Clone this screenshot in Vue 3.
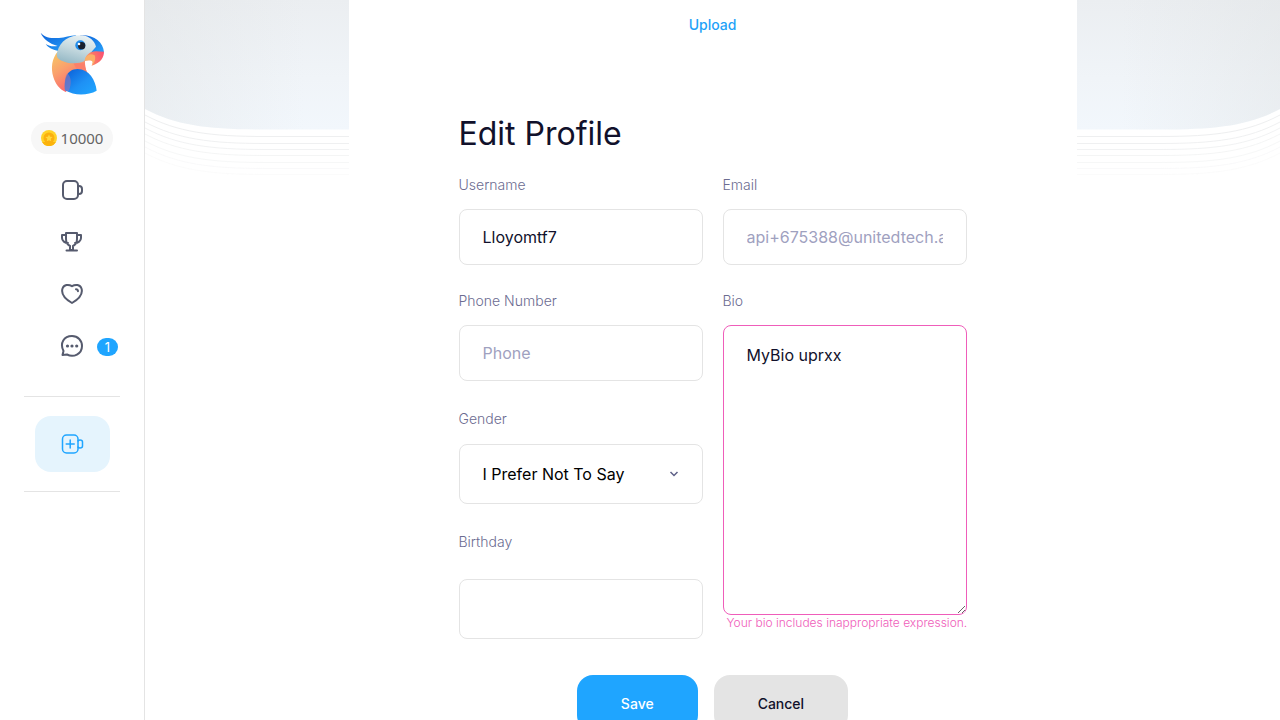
<script setup>
import { ref } from 'vue'

const username = ref('Lloyomtf7')
const email = ref('')
const phone = ref('')
const bio = ref('MyBio uprxx')
const gender = ref('none')
const birthday = ref('')

const rings = [
  { y: 6, o: 1 },
  { y: 13, o: 0.95 },
  { y: 19, o: 0.8 },
  { y: 25, o: 0.65 },
  { y: 32, o: 0.5 },
  { y: 38, o: 0.35 },
  { y: 44, o: 0.25 },
]
</script>

<template>
  <div class="shell">
    <aside class="sidebar">
      <a class="logo" href="#" aria-label="Home">
        <svg viewBox="-9 0 270 270" width="90" height="90" aria-hidden="true">
          <defs>
            <linearGradient id="crest" x1="0" y1="0" x2="1" y2="1">
              <stop offset="0" stop-color="#0b5fd8" /><stop offset="1" stop-color="#2aa5fb" />
            </linearGradient>
            <linearGradient id="body" x1="0" y1="0" x2="0.6" y2="1">
              <stop offset="0" stop-color="#f6cb64" /><stop offset="0.45" stop-color="#faa06c" /><stop offset="1" stop-color="#fb5c6e" />
            </linearGradient>
            <linearGradient id="face" x1="0.7" y1="0" x2="0.3" y2="1">
              <stop offset="0" stop-color="#eaf2f4" /><stop offset="0.5" stop-color="#c5d9df" /><stop offset="1" stop-color="#96b9c6" />
            </linearGradient>
            <linearGradient id="wing" x1="0" y1="0" x2="1" y2="1">
              <stop offset="0" stop-color="#0a5cd6" /><stop offset="0.55" stop-color="#1e91f5" /><stop offset="1" stop-color="#20a7ff" />
            </linearGradient>
            <linearGradient id="beak" x1="0" y1="0.6" x2="1" y2="0.3">
              <stop offset="0" stop-color="#fca567" /><stop offset="0.5" stop-color="#fb7568" /><stop offset="1" stop-color="#fa5271" />
            </linearGradient>
          </defs>
          <path d="M84 94C65 116 62 145 70 171C76 191 88 208 107 216L172 160C166 148 164 136 165 120Z" fill="url(#body)" />
          <path d="M32 38C45 54 67 55 87 54C105 53 119 47 139 46L86 93C69 90 54 83 47 72C58 80 72 80 83 78C59 71 40 58 32 38Z" fill="url(#crest)" />
          <path d="M150 46C190 43 220 65 222 97L181 102L164 65Z" fill="url(#crest)" />
          <path d="M130 130H165C165 142 168 152 175 164L147 160Z" fill="#fb806b" />
          <path d="M82 95C91 60 123 44 157 46C178 48 194 63 198 80C184 97 169 111 164 123C145 132 115 132 95 122C82 116 78 108 82 95Z" fill="url(#face)" />
          <path d="M164 123C166 105 180 95 198 94L222 95C222 111 213 128 185 137C191 128 190 122 181 121C175 120 169 121 164 123Z" fill="url(#beak)" />
          <path d="M164 123C166 108 178 97 194 106C198 115 194 130 185 137C190 126 188 122 181 121C175 120 169 121 164 123Z" fill="#fbb068" />
          <path d="M105 211C102 181 108 147 143 147C177 148 196 179 200 212C173 227 134 228 105 211Z" fill="url(#wing)" />
          <path d="M105 211C103 190 104 172 112 160C124 171 126 190 116 214Z" fill="#9274b5" opacity="0.6" />
          <circle cx="151" cy="76" r="15" fill="#218ceb" />
          <circle cx="155" cy="77" r="11" fill="#17202e" />
          <circle cx="147" cy="72" r="4" fill="#fff" />
        </svg>
      </a>

      <a class="coins" href="#">
        <svg viewBox="0 0 16 16" width="16" height="16" aria-hidden="true">
          <circle cx="8" cy="8" r="8" fill="#ffd329" />
          <path d="M1 12A8 8 0 0 0 15 12Z" fill="#fbb40b" />
          <circle cx="8" cy="8" r="5.500" fill="#fbb00f" />
          <path d="M8 4.500l1.100 2.300 2.500.3-1.900 1.700.5 2.500L8 10.200l-2.200 1.100.5-2.500-1.900-1.700 2.500-.3Z" fill="#ffd83e" />
        </svg>
        <span>10000</span>
      </a>

      <nav class="nav">
        <a href="#" aria-label="Live">
          <svg viewBox="0 0 24 24" width="24" height="24" class="icon">
            <rect x="3" y="3" width="15" height="18" rx="4" />
            <path d="M18 8h1a3 3 0 0 1 3 3v2a3 3 0 0 1-3 3h-1" />
          </svg>
        </a>
        <a href="#" aria-label="Leaderboard">
          <svg viewBox="0 0 24 24" width="24" height="24" class="icon">
            <path d="M6 3h11v6c0 4-2 6-4 7v4h-3v-4c-2-1-4-3-4-7ZM6 5H2v3c0 3 3 5 6 5M17 5h4v3c0 3-3 5-6 5M6.500 20.500h10.500" />
          </svg>
        </a>
        <a href="#" aria-label="Favourites">
          <svg viewBox="0 0 24 24" width="24" height="24" class="icon">
            <path d="M12 4.200C8.500 2 4 2.500 2.500 6.500C0.500 13 7 18 12 21C17 18 23.500 13 21.500 6.500C20 2.500 15.500 2 12 4.200Z" />
            <path d="M16 7.200c1.300 0 1.900.7 2 2" />
          </svg>
        </a>
        <a href="#" aria-label="Messages, 1 unread">
          <svg viewBox="0 0 24 24" width="24" height="24" class="icon">
            <path d="M2.500 21L3.500 17C-0.500 9 4 2 12 2C18 2 22 6.500 22 12C22 20 13.500 24 7 20.500Z" />
            <g class="dots"><circle cx="7.500" cy="12" r="1.600" /><circle cx="12" cy="12" r="1.600" /><circle cx="16.700" cy="12" r="1.600" /></g>
          </svg>
          <span class="badge">1</span>
        </a>
      </nav>

      <div class="create">
        <a href="#" aria-label="Start a stream">
          <svg viewBox="0 0 24 24" width="24" height="24" class="icon">
            <rect x="2.500" y="3" width="15.500" height="18" rx="4" />
            <path d="M18 9c.7-1 1.300-1 2-1 1.500 0 2.500 1 2.500 2v4c0 1-1 2-2.500 2-.7 0-1.300 0-2-1M10.200 8v8M6.200 12h8" />
          </svg>
        </a>
      </div>
    </aside>

    <main class="main">
      <svg class="banner" viewBox="0 0 1135 180" preserveAspectRatio="none" aria-hidden="true">
        <defs>
          <linearGradient id="sky" x1="0" y1="0" x2="0" y2="1">
            <stop offset="0" stop-color="#ebeef1" /><stop offset="0.6" stop-color="#f0f4f8" /><stop offset="1" stop-color="#f2f7fc" />
          </linearGradient>
          <linearGradient id="shade" x1="0" y1="0" x2="1" y2="0">
            <stop offset="0" stop-color="#dfe2e3" stop-opacity="0.4" /><stop offset="0.14" stop-color="#dfe2e3" stop-opacity="0" />
            <stop offset="0.86" stop-color="#dfe2e3" stop-opacity="0" /><stop offset="1" stop-color="#dfe2e3" stop-opacity="0.4" />
          </linearGradient>
        </defs>
        <path d="M0 0H1135V109C1103 126 1070 129.500 1015 129.500H120C65 129.500 32 126 0 109Z" fill="url(#sky)" />
        <path d="M0 0H1135V109C1103 126 1070 129.500 1015 129.500H120C65 129.500 32 126 0 109Z" fill="url(#shade)" />
        <path
          v-for="r in rings"
          :key="r.y"
          :transform="`translate(0 ${r.y})`"
          d="M0 109C32 126 65 130.500 120 130.500H1015C1070 130.500 1103 126 1135 109"
          fill="none"
          stroke="#eeeff0"
          :stroke-opacity="r.o"
        />
      </svg>

      <section class="card">
        <button type="button" class="upload">Upload</button>
        <form class="form" @submit.prevent>
          <h1>Edit Profile</h1>
          <div class="columns">
            <div class="column">
              <div class="field">
                <label for="username">Username</label>
                <input id="username" v-model="username" type="text" />
              </div>
              <div class="field">
                <label for="phone">Phone Number</label>
                <input id="phone" v-model="phone" type="tel" placeholder="Phone" />
              </div>
              <div class="field gender">
                <label for="gender">Gender</label>
                <div class="select">
                  <select id="gender" v-model="gender">
                    <option value="none">I Prefer Not To Say</option>
                    <option value="female">Female</option>
                    <option value="male">Male</option>
                  </select>
                  <svg viewBox="0 0 10 6" width="10" height="6" aria-hidden="true"><path d="M1.500 1L5 4.500L8.500 1" /></svg>
                </div>
              </div>
              <div class="field birthday">
                <label for="birthday">Birthday</label>
                <input id="birthday" v-model="birthday" type="text" class="tall" />
              </div>
            </div>
            <div class="column">
              <div class="field">
                <label for="email">Email</label>
                <input id="email" v-model="email" type="email" placeholder="api+675388@unitedtech.ai" />
              </div>
              <div class="field">
                <label for="bio">Bio</label>
                <textarea id="bio" v-model="bio" spellcheck="false" aria-invalid="true" aria-describedby="bio-error"></textarea>
                <p id="bio-error" class="error">Your bio includes inappropriate expression.</p>
              </div>
            </div>
          </div>
          <div class="actions">
            <button type="submit" class="save">Save</button>
            <button type="button" class="cancel">Cancel</button>
          </div>
        </form>
      </section>
    </main>
  </div>
</template>

<style>
body {
  margin: 0;
  background: #fff;
}
</style>

<style scoped>
.shell,
.shell * {
  box-sizing: border-box;
}
.shell {
  display: flex;
  height: 100vh;
  overflow: hidden;
  font-family: Inter, "Open Sans", sans-serif;
  color: #11112b;
}
button,
input,
select,
textarea {
  font-family: inherit;
}
.sidebar {
  flex: none;
  width: 145px;
  border-right: 1px solid #e4e4e4;
  display: flex;
  flex-direction: column;
  align-items: center;
  padding-top: 20px;
}
.logo,
.logo svg {
  display: block;
}
.coins {
  display: flex;
  align-items: center;
  gap: 4px;
  height: 32px;
  margin-top: 12px;
  padding: 0 10px;
  border-radius: 16px;
  background: #f7f7f7;
  color: #646464;
  font-family: "Noto Sans", sans-serif;
  font-size: 15px;
  line-height: 20px;
  text-decoration: none;
}
.nav {
  width: 100%;
  margin-top: 10px;
}
.nav a {
  position: relative;
  display: flex;
  align-items: center;
  justify-content: center;
  height: 52px;
}
.icon {
  display: block;
  fill: none;
  stroke: #565b6e;
  stroke-width: 2;
  stroke-linejoin: round;
  stroke-linecap: round;
}
.dots {
  fill: #565b6e;
  stroke: none;
}
.badge {
  position: absolute;
  right: 26px;
  top: 18px;
  width: 21px;
  border-radius: 9px;
  background: #1fa5ff;
  color: #fff;
  font-size: 13px;
  line-height: 18px;
  text-align: center;
}
.create {
  width: 96px;
  margin-top: 24px;
  padding: 19px 0;
  border: solid #e4e4e4;
  border-width: 1px 0;
  display: flex;
  justify-content: center;
}
.create a {
  display: flex;
  align-items: center;
  justify-content: center;
  width: 75px;
  height: 56px;
  border-radius: 16px;
  background: #e5f4fd;
}
.create .icon {
  stroke: #1fa5ff;
  stroke-width: 1.5;
}
.main {
  position: relative;
  flex: 1;
  min-width: 0;
  overflow-y: auto;
  scrollbar-width: none;
}
.banner {
  position: absolute;
  top: 0;
  left: 0;
  width: 100%;
  height: 180px;
}
.card {
  position: relative;
  max-width: 728px;
  margin: 0 auto;
  padding: 14px 110px 40px;
  background: #fff;
  display: flex;
  flex-direction: column;
}
.upload {
  align-self: center;
  padding: 0;
  border: 0;
  background: none;
  color: #1fa2f8;
  font-size: 14px;
  font-weight: 500;
  line-height: 22px;
}
h1 {
  margin: 78px 0 21px;
  font-size: 32px;
  font-weight: 400;
  line-height: 40px;
}
.columns {
  display: grid;
  grid-template-columns: 1fr 1fr;
  gap: 20px;
}
.column {
  display: flex;
  flex-direction: column;
  gap: 26px;
  min-width: 0;
}
.field {
  display: flex;
  flex-direction: column;
}
.field label {
  margin-bottom: 14px;
  color: #6c6c91;
  font-size: 14px;
  font-weight: 300;
  line-height: 20px;
}
input,
select,
textarea {
  width: 100%;
  height: 56px;
  margin: 0;
  padding: 0 23px;
  border: 1px solid #e4e4e4;
  border-radius: 8px;
  background: #fff;
  color: #11112b;
  font-size: 16px;
  outline: none;
}
input::placeholder {
  color: #9fa1bf;
  opacity: 1;
}
.select {
  position: relative;
}
select {
  display: block;
  height: 60px;
  appearance: none;
  color: #000;
}
.select svg {
  position: absolute;
  right: 24px;
  top: 27px;
  fill: none;
  stroke: #5f6188;
  stroke-width: 1.5;
  pointer-events: none;
}
.gender,
.birthday {
  margin-top: 2px;
}
.gender label {
  margin-bottom: 15px;
}
.birthday label {
  margin-bottom: 27px;
}
.field .tall {
  height: 60px;
}
textarea {
  display: block;
  height: 290px;
  padding: 17px 23px;
  border-color: #ef5dba;
  line-height: 24px;
  resize: vertical;
}
.error {
  margin: 0 -10px 0 4px;
  color: #ef5dba;
  font-size: 12px;
  font-weight: 300;
  line-height: 16px;
  white-space: nowrap;
}
.actions {
  display: flex;
  justify-content: center;
  gap: 16px;
  margin-top: 36px;
}
.actions button {
  height: 56px;
  padding: 0 44px;
  border: 0;
  border-radius: 16px;
  font-size: 14px;
  font-weight: 500;
}
.actions .save {
  background: #1fa5ff;
  color: #fff;
}
.actions .cancel {
  background: #e4e4e4;
  color: #11112b;
}
</style>
